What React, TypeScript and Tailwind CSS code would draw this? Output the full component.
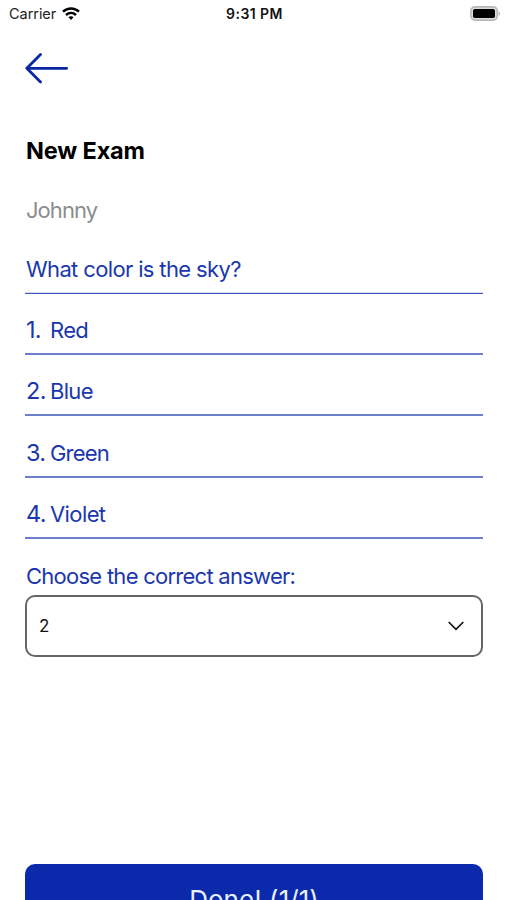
type Option = { n: number; label: string; spacing: string };

const OPTIONS: Option[] = [
  { n: 1, label: "Red", spacing: "tracking-[-0.7px]" },
  { n: 2, label: "Blue", spacing: "tracking-[-0.7px]" },
  { n: 3, label: "Green", spacing: "tracking-[-0.8px]" },
  { n: 4, label: "Violet", spacing: "tracking-[-0.6px]" },
];

function StatusBar() {
  return (
    <div className="grid h-[27px] grid-cols-3 items-center pl-[9px] pr-[6px] text-black">
      <div className="flex items-center gap-[6px]">
        <span className="text-[14.5px] leading-7 tracking-[-0.05px] text-[#222]">Carrier</span>
        <svg width="18" height="14" viewBox="0 0 18 14" fill="none" stroke="currentColor" strokeWidth="2.4">
          <path d="M1 4.7C5.5.4 12.5.4 17 4.7" />
          <path d="M4 8C6.9 5.3 11.1 5.3 14 8" />
          <path d="M6.5 10.3C8 9 10 9 11.5 10.3L9 13Z" fill="currentColor" stroke="none" />
        </svg>
      </div>
      <div className="pr-px text-center text-[14px] font-semibold leading-7 tracking-[0.45px] text-[#111]">9:31 PM</div>
      <svg className="mb-px justify-self-end" width="31" height="15" viewBox="0 0 31 15">
        <rect x=".9" y=".9" width="26.4" height="13.2" rx="4" fill="#ddd" stroke="#b8b8b8" strokeWidth="1.6" />
        <rect x="3" y="3" width="22" height="9" rx="1.8" fill="#000" />
        <path d="M28.6 5.2C30.5 6 30.5 9 28.6 9.8Z" fill="#b5b5b5" />
      </svg>
    </div>
  );
}

export default function App() {
  return (
    <div className="flex h-[900px] w-[507px] flex-col overflow-hidden bg-white font-['Inter',sans-serif] text-[#1a37ad]">
      <StatusBar />

      <main className="flex flex-1 flex-col pl-[25px] pr-6">
        <button className="mt-[25px] h-8 w-11 text-[#0a27a3]" aria-label="Back">
          <svg width="44" height="32" viewBox="0 0 44 32" fill="none" stroke="currentColor" strokeWidth="2.8" strokeLinecap="round" strokeLinejoin="round">
            <path d="M15.5 2.5L1.8 16.3L15.5 30M1.8 16.3H41.7" />
          </svg>
        </button>

        <h1 className="mt-[51px] pl-px text-[23.5px] font-bold leading-8 tracking-[-0.15px] text-black">New Exam</h1>
        <p className="mt-[27px] pl-px text-[22px] leading-8 tracking-[-0.95px] text-[#8c8c8c]">Johnny</p>

        <div className="mt-[7px] flex h-[61px] items-end border-b border-[#3f56ba] pb-2 pl-px text-[22px] leading-8 tracking-[-0.64px] shadow-[0_-1px_0_#d3dbf5_inset]">
          What color is the sky?
        </div>

        {OPTIONS.map((o) => (
          <div key={o.n} className="flex h-[61.2px] shrink-0 items-end border-b-2 border-[#6d7fcb] pb-[7px] pl-px leading-8">
            <span className="w-6 whitespace-nowrap text-[23.5px] tracking-[-0.7px]">{o.n}.</span>
            <span className={`text-[22px] ${o.spacing}`}>{o.label}</span>
          </div>
        ))}

        <label className="mt-[21.2px] pl-px text-[22px] leading-8 tracking-[-0.74px]">Choose the correct answer:</label>
        <div className="mt-[3px] flex h-[62px] shrink-0 items-center justify-between rounded-[10px] border-2 border-[#666] pl-3 pr-4 pt-px text-[17px] text-[#111]">
          <span>2</span>
          <svg width="18" height="12" viewBox="0 0 18 12" fill="none" stroke="currentColor" strokeWidth="1.7">
            <path d="M1.7 2L9 9.4L16.3 2" />
          </svg>
        </div>

        <button className="mt-[207px] h-[72px] shrink-0 rounded-[10px] bg-[#0a29ab] text-[26px] leading-[72px] tracking-[0.05px] text-[#e8f0ff]">
          Done! (1/1)
        </button>
      </main>
    </div>
  );
}
